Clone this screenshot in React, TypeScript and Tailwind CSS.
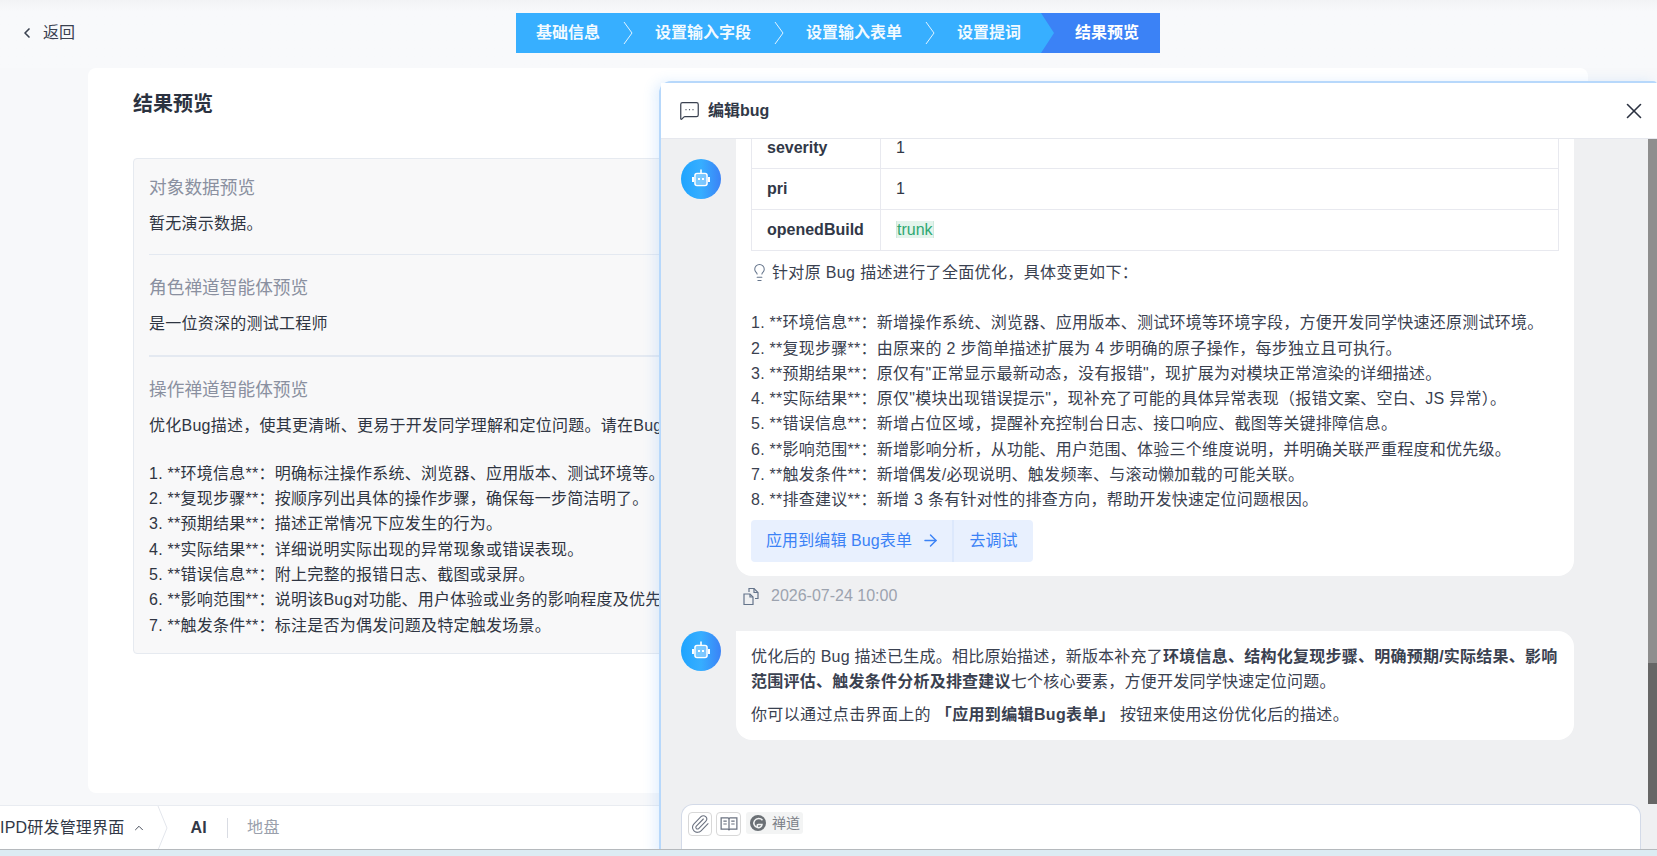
import { ArrowRight, ChevronLeft, ChevronUp, Lightbulb, MessageSquareMore, Paperclip, X } from 'lucide-react';

const steps = ['基础信息', '设置输入字段', '设置输入表单', '设置提词'];

const promptLines = [
  '1. **环境信息**：明确标注操作系统、浏览器、应用版本、测试环境等。',
  '2. **复现步骤**：按顺序列出具体的操作步骤，确保每一步简洁明了。',
  '3. **预期结果**：描述正常情况下应发生的行为。',
  '4. **实际结果**：详细说明实际出现的异常现象或错误表现。',
  '5. **错误信息**：附上完整的报错日志、截图或录屏。',
  '6. **影响范围**：说明该Bug对功能、用户体验或业务的影响程度及优先级。',
  '7. **触发条件**：标注是否为偶发问题及特定触发场景。',
];

const changeLines = [
  '1. **环境信息**：新增操作系统、浏览器、应用版本、测试环境等环境字段，方便开发同学快速还原测试环境。',
  '2. **复现步骤**：由原来的 2 步简单描述扩展为 4 步明确的原子操作，每步独立且可执行。',
  '3. **预期结果**：原仅有"正常显示最新动态，没有报错"，现扩展为对模块正常渲染的详细描述。',
  '4. **实际结果**：原仅"模块出现错误提示"，现补充了可能的具体异常表现（报错文案、空白、JS 异常）。',
  '5. **错误信息**：新增占位区域，提醒补充控制台日志、接口响应、截图等关键排障信息。',
  '6. **影响范围**：新增影响分析，从功能、用户范围、体验三个维度说明，并明确关联严重程度和优先级。',
  '7. **触发条件**：新增偶发/必现说明、触发频率、与滚动懒加载的可能关联。',
  '8. **排查建议**：新增 3 条有针对性的排查方向，帮助开发快速定位问题根因。',
];

const StepChevron = () => (
  <svg width="10" height="24" viewBox="0 0 10 24" fill="none" className="mx-[22.5px] shrink-0">
    <path d="M1 1l8 11-8 11" stroke="#fff" strokeOpacity="0.85" strokeWidth="1" />
  </svg>
);

const BotAvatar = () => (
  <div className="flex h-10 w-10 shrink-0 items-center justify-center rounded-full bg-gradient-to-r from-[#1ea4ff] via-[#36aeff] to-[#3b82f6]">
    <svg width="20" height="20" viewBox="0 0 20 20">
      <rect x="9.2" y="0.5" width="1.6" height="4" fill="#fff" />
      <rect x="4" y="4.5" width="12" height="12" rx="2" fill="none" stroke="#fff" strokeWidth="1.6" />
      <rect x="5" y="5.5" width="10" height="10" fill="#fff" fillOpacity="0.35" />
      <rect x="7" y="9" width="2" height="2" fill="#fff" />
      <rect x="11" y="9" width="2" height="2" fill="#fff" />
      <rect x="1" y="8" width="2" height="5" fill="#fff" />
      <rect x="17" y="8" width="2" height="5" fill="#fff" />
    </svg>
  </div>
);

const Section = ({ title, children, className }: { title: string; children: React.ReactNode; className?: string }) => (
  <div className={className}>
    <h3 className="text-[17.7px] leading-[26px] text-[#8a90a0]">{title}</h3>
    <div className="mt-[10px] text-[16px] leading-[25.3px] tracking-[0.25px] text-[#2f3542]">{children}</div>
  </div>
);

export default function App() {
  return (
    <div className="relative flex h-[856px] w-[1657px] flex-col overflow-hidden bg-[#f7f8fa] font-['Liberation_Sans','Noto_Sans_CJK_SC',sans-serif] text-[#313847]">
      {/* Top bar */}
      <div className="flex h-[68px] shrink-0 items-start bg-gradient-to-b from-[#f2f3f5] to-[#f8f9fb] to-[12px] pt-[13px]">
        <div className="flex h-10 w-[516px] shrink-0 items-center pl-[19px] text-[16px] text-[#3a4150]">
          <ChevronLeft size={16} strokeWidth={2.5} />
          <span className="ml-[8px]">返回</span>
        </div>
        <div className="flex h-10 w-[644px] bg-[#37afff] text-[16px] font-bold text-white">
          <div className="flex items-center pl-5">
            {steps.map((step, i) => (
              <div key={step} className="flex items-center">
                <span className="text-white/95">{step}</span>
                {i < steps.length - 1 && <StepChevron />}
              </div>
            ))}
          </div>
          <div className="ml-auto flex w-[119px] items-center bg-[#3b82f6] pl-[34px] [clip-path:polygon(0_0,100%_0,100%_100%,0_100%,13px_50%)]">
            结果预览
          </div>
        </div>
      </div>

      {/* Main card */}
      <div className="ml-[88px] mr-[69px] h-[725px] shrink-0 rounded-[8px] bg-white pl-[45px] pt-[22px]">
        <h1 className="text-[20px] font-bold leading-[28px] text-[#2b3240]">结果预览</h1>
        <div className="mt-[40px] w-[1200px] rounded-[4px] border border-[#e6eaf0] bg-[#f8f8f9] px-[15px] pt-[16px] pb-[15px]">
          <Section title="对象数据预览" className="border-b border-[#e4e9f1] pb-[18px]">
            暂无演示数据。
          </Section>
          <Section title="角色禅道智能体预览" className="border-b-2 border-[#e4e9f1] pt-[20px] pb-[18px]">
            是一位资深的测试工程师
          </Section>
          <Section title="操作禅道智能体预览" className="pt-[20px]">
            <p>优化Bug描述，使其更清晰、更易于开发同学理解和定位问题。请在Bug描述中补充以下内容：</p>
            <p className="h-[23px]" />
            {promptLines.map((line) => (
              <p key={line}>{line}</p>
            ))}
          </Section>
        </div>
      </div>

      {/* Bottom tabs */}
      <div className="mt-[12px] flex h-[44px] shrink-0 items-center border-t border-[#e9ecf1] bg-white text-[16px]">
        <span className="whitespace-nowrap tracking-[0.2px]">IPD研发管理界面</span>
        <ChevronUp size={14} strokeWidth={1.5} className="ml-[8px]" />
        <svg width="12" height="44" viewBox="0 0 12 44" fill="none" className="ml-[11px]">
          <path d="M1 0l9 22-9 22" stroke="#e3e6ec" />
        </svg>
        <span className="ml-[21px] font-bold tracking-[0.3px]">AI</span>
        <span className="ml-[20px] h-[20px] w-px bg-[#d9dce3]" />
        <span className="ml-[19px] tracking-[0.3px] text-[#9aa0ac]">地盘</span>
      </div>

      {/* Bug editing panel */}
      <aside className="absolute top-[81px] right-0 bottom-0 left-[659px] flex flex-col rounded-tl-[12px] rounded-tr-[4px] border-t-2 border-l-2 border-[#b7d8fb] bg-[#eff0f2] shadow-[-5px_0_12px_rgba(96,165,250,0.16)]">
        <header className="flex h-[56px] shrink-0 items-center border-b border-[#e6e8ee] bg-white pl-[18px] pr-[10px]">
          <MessageSquareMore size={21} strokeWidth={1.4} className="text-[#3a4150]" />
          <span className="ml-[8px] text-[16px] font-bold">编辑bug</span>
          <X size={26} strokeWidth={1.5} className="ml-auto text-[#2b3240]" />
        </header>

        <div className="relative flex-1 overflow-hidden pl-[20px]">
          <div className="flex gap-[15px]">
            <div className="pt-[20px]">
              <BotAvatar />
            </div>
            <div className="-mt-[12px] h-[449px] w-[838px] rounded-b-[16px] bg-white px-[15px]">
              <table className="w-[808px] border-collapse text-[16px]">
                <tbody>
                  {[
                    ['severity', '1'],
                    ['pri', '1'],
                  ].map(([k, v]) => (
                    <tr key={k} className="h-[41px]">
                      <td className="w-[129px] border border-[#e8e9ef] pl-[15px] font-bold">{k}</td>
                      <td className="border border-[#e8e9ef] pl-[15px]">{v}</td>
                    </tr>
                  ))}
                  <tr className="h-[41px]">
                    <td className="border border-[#e8e9ef] pl-[15px] font-bold">openedBuild</td>
                    <td className="border border-[#e8e9ef] pl-[15px]">
                      <span className="border-x border-[#cfe9dd] bg-[#e3f4ec] text-[#2fa872]">trunk</span>
                    </td>
                  </tr>
                </tbody>
              </table>

              <div className="mt-[9px] text-[16px] leading-[25.3px] tracking-[0.26px] text-[#3a4150]">
                <p className="flex items-center tracking-[0.35px]">
                  <Lightbulb size={19} strokeWidth={1.3} className="mr-[3px] -ml-px text-[#64748b]" />
                  针对原 Bug 描述进行了全面优化，具体变更如下：
                </p>
                <p className="h-[25px]" />
                {changeLines.map((line) => (
                  <p key={line} className="whitespace-nowrap">{line}</p>
                ))}
              </div>

              <div className="mt-[7px] flex h-[42px] w-[282px] rounded-[4px] bg-[#e8f0fe] text-[16px] text-[#3b82f6]">
                <button className="flex w-[203px] items-center border-r-2 border-[#dce8fc] pl-[15px] tracking-[0.1px]">
                  应用到编辑 Bug表单
                  <ArrowRight size={19} strokeWidth={1.8} className="ml-[9px]" />
                </button>
                <button className="flex-1 text-center">去调试</button>
              </div>
            </div>
          </div>

          <div className="mt-[10px] ml-[61px] flex h-[20px] items-center text-[16px] text-[#9ca3af]">
            <svg width="19" height="19" viewBox="0 0 19 19" fill="none" stroke="#64748b" strokeWidth="1.2">
              <path d="M2 7h6l3 3v7.5H2z" />
              <path d="M8 7v3h3" />
              <path d="M7 5V1.5h5l4 4v6h-3" />
              <path d="M12 1.5v4h4" />
            </svg>
            <span className="ml-[10px]">2026-07-24 10:00</span>
          </div>

          <div className="mt-[25px] flex gap-[15px]">
            <BotAvatar />
            <div className="h-[109px] w-[838px] rounded-r-[16px] rounded-bl-[16px] bg-white px-[15px] pt-[13px] text-[16px] leading-[25.3px] text-[#3a4150]">
              <p className="tracking-[0.24px]">
                优化后的 Bug 描述已生成。相比原始描述，新版本补充了
                <b>环境信息、结构化复现步骤、明确预期/实际结果、影响范围评估、触发条件分析及排查建议</b>
                七个核心要素，方便开发同学快速定位问题。
              </p>
              <p className="mt-[7px] tracking-[0.36px]">
                你可以通过点击界面上的 <b>「应用到编辑Bug表单」</b> 按钮来使用这份优化后的描述。
              </p>
            </div>
          </div>

          {/* Scrollbar */}
          <div className="absolute top-0 right-0 bottom-0 w-[9px] bg-[#8e8e8e]">
            <div className="absolute top-[524px] right-0 bottom-0 left-0 bg-[#666666]" />
          </div>
        </div>

        {/* Chat input */}
        <div className="h-[52px] shrink-0 pl-[20px] pr-[16px]">
          <div className="flex h-full items-start gap-[4px] rounded-t-[12px] border-x border-t border-[#d3dae8] bg-white pl-[6px] pt-[7px]">
            <span className="flex h-[24px] w-[24px] items-center justify-center rounded-[4px] border border-[#d8d8d8] text-[#6b7280]">
              <Paperclip size={20} strokeWidth={1.3} />
            </span>
            <span className="flex h-[24px] w-[25px] items-center justify-center rounded-[4px] border border-[#d8d8d8] text-[#6b7280]">
              <svg width="18" height="18" viewBox="0 0 16 16" fill="none" stroke="currentColor" strokeWidth="1.1">
                <path d="M1 2.5h6.2L8 3.3l.8-.8H15v10H8.8l-.8.8-.8-.8H1z" />
                <path d="M8 3.3v9.5M3 5.5h3M3 8h3M10 5.5h3M10 8h3" />
              </svg>
            </span>
            <span className="ml-[1px] flex h-[22px] items-center gap-[6px] rounded-[3px] bg-[#f3f4f4] pl-[4px] pr-[3px] text-[14px] text-[#7b8088]">
              <svg width="16" height="16" viewBox="0 0 16 16" fill="none">
                <circle cx="8" cy="8" r="8" fill="#6b7075" />
                <path d="M12.5 5.2C10.5 3 6.5 3 4.6 5.6 3 8 4 12 7.6 12.6c2.4.3 4.2-1 4.4-3.2H8.2c-1.4 0-1.4 1.8 0 1.8" stroke="#f3f4f4" strokeWidth="1.5" />
              </svg>
              禅道
            </span>
          </div>
        </div>
      </aside>

      {/* Host window strip */}
      <div className="absolute right-0 bottom-0 left-0 h-[7px] border-t border-[#b5b9bd] bg-[#dcecf3]" />
    </div>
  );
}
